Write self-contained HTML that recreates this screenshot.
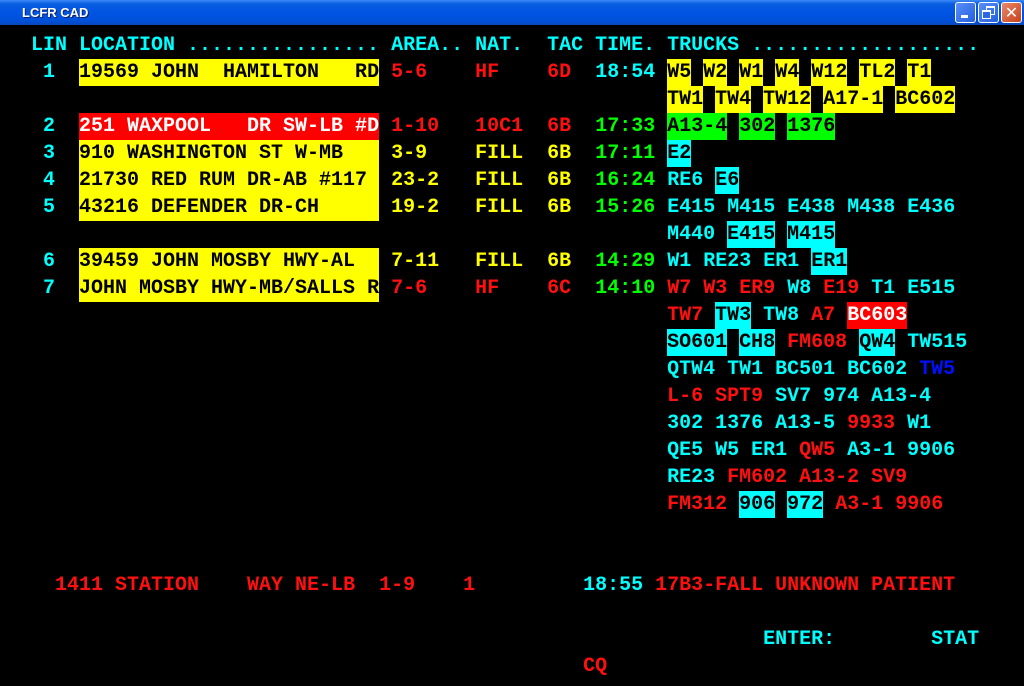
<!DOCTYPE html>
<html><head><meta charset="utf-8"><style>
html,body{margin:0;padding:0;}
body{width:1024px;height:686px;background:#000;position:relative;overflow:hidden;}
.tb{position:absolute;left:0;top:0;width:1024px;height:25px;background:linear-gradient(#3d8af7 0%,#0a5ee0 15%,#0054e3 50%,#0050d8 85%,#0a46b8 100%);}
.tt{position:absolute;left:22px;top:5px;color:#fff;font:bold 13px "Liberation Sans",sans-serif;text-shadow:1px 1px #0a1f6a;}
.btn{position:absolute;top:2px;width:19px;height:19px;border:1px solid #fff;border-radius:3px;background:linear-gradient(135deg,#5a8ef8,#2360e0);}
.btn.x{background:linear-gradient(135deg,#e88a6a,#c8401c);}
.r{position:absolute;left:7px;height:27px;line-height:27px;white-space:pre;font:bold 20px "Liberation Mono",monospace;color:#00ffff;}
.r span{padding:2px 0;}
.c{color:#00ffff}.y{color:#ffff00}.rd{color:#ff1010}.g{color:#00ff00}.b{color:#0010ff}
.Y{background:#ffff00;color:#000}.R{background:#ff0000;color:#fff}.G{background:#00ff00;color:#000}.C{background:#00ffff;color:#000}
</style></head><body>
<div class="tb"><div class="tt">LCFR CAD</div>
<div class="btn" style="left:955px"><div style="position:absolute;left:5px;top:12px;width:7px;height:3px;background:#fff"></div></div>
<div class="btn" style="left:978px"><div style="position:absolute;left:7px;top:3px;width:7px;height:6px;border:1px solid #fff;border-top-width:2px"></div><div style="position:absolute;left:3px;top:7px;width:7px;height:6px;border:1px solid #fff;border-top-width:2px;background:#2d68e4"></div></div>
<div class="btn x" style="left:1001px"><div style="position:absolute;left:2px;top:0;width:15px;text-align:center;color:#fff;font:bold 16px/19px 'DejaVu Sans',sans-serif">✕</div></div>
</div>
<div class="r" style="top:34px">  LIN LOCATION ................ AREA.. NAT.  TAC TIME. TRUCKS ...................</div>
<div class="r" style="top:61px">   1  <span class="Y">19569 JOHN  HAMILTON   RD</span> <span class="rd">5-6</span>    <span class="rd">HF</span>    <span class="rd">6D</span>  <span class="c">18:54</span> <span class="Y">W5</span> <span class="Y">W2</span> <span class="Y">W1</span> <span class="Y">W4</span> <span class="Y">W12</span> <span class="Y">TL2</span> <span class="Y">T1</span></div>
<div class="r" style="top:88px">                                                       <span class="Y">TW1</span> <span class="Y">TW4</span> <span class="Y">TW12</span> <span class="Y">A17-1</span> <span class="Y">BC602</span></div>
<div class="r" style="top:115px">   2  <span class="R">251 WAXPOOL   DR SW-LB #D</span> <span class="rd">1-10</span>   <span class="rd">10C1</span>  <span class="rd">6B</span>  <span class="g">17:33</span> <span class="G">A13-4</span> <span class="G">302</span> <span class="G">1376</span></div>
<div class="r" style="top:142px">   3  <span class="Y">910 WASHINGTON ST W-MB   </span> <span class="y">3-9</span>    <span class="y">FILL</span>  <span class="y">6B</span>  <span class="g">17:11</span> <span class="C">E2</span></div>
<div class="r" style="top:169px">   4  <span class="Y">21730 RED RUM DR-AB #117 </span> <span class="y">23-2</span>   <span class="y">FILL</span>  <span class="y">6B</span>  <span class="g">16:24</span> RE6 <span class="C">E6</span></div>
<div class="r" style="top:196px">   5  <span class="Y">43216 DEFENDER DR-CH     </span> <span class="y">19-2</span>   <span class="y">FILL</span>  <span class="y">6B</span>  <span class="g">15:26</span> E415 M415 E438 M438 E436</div>
<div class="r" style="top:223px">                                                       M440 <span class="C">E415</span> <span class="C">M415</span></div>
<div class="r" style="top:250px">   6  <span class="Y">39459 JOHN MOSBY HWY-AL  </span> <span class="y">7-11</span>   <span class="y">FILL</span>  <span class="y">6B</span>  <span class="g">14:29</span> W1 RE23 ER1 <span class="C">ER1</span></div>
<div class="r" style="top:277px">   7  <span class="Y">JOHN MOSBY HWY-MB/SALLS R</span> <span class="rd">7-6</span>    <span class="rd">HF</span>    <span class="rd">6C</span>  <span class="g">14:10</span> <span class="rd">W7 W3 ER9</span> W8 <span class="rd">E19</span> T1 E515</div>
<div class="r" style="top:304px">                                                       <span class="rd">TW7</span> <span class="C">TW3</span> TW8 <span class="rd">A7</span> <span class="R">BC603</span></div>
<div class="r" style="top:331px">                                                       <span class="C">SO601</span> <span class="C">CH8</span> <span class="rd">FM608</span> <span class="C">QW4</span> TW515</div>
<div class="r" style="top:358px">                                                       QTW4 TW1 BC501 BC602 <span class="b">TW5</span></div>
<div class="r" style="top:385px">                                                       <span class="rd">L-6 SPT9</span> SV7 974 A13-4</div>
<div class="r" style="top:412px">                                                       302 1376 A13-5 <span class="rd">9933</span> W1</div>
<div class="r" style="top:439px">                                                       QE5 W5 ER1 <span class="rd">QW5</span> A3-1 9906</div>
<div class="r" style="top:466px">                                                       RE23 <span class="rd">FM602 A13-2 SV9</span></div>
<div class="r" style="top:493px">                                                       <span class="rd">FM312</span> <span class="C">906</span> <span class="C">972</span> <span class="rd">A3-1 9906</span></div>
<div class="r" style="top:574px">    <span class="rd">1411 STATION    WAY NE-LB  1-9    1</span>         18:55 <span class="rd">17B3-FALL UNKNOWN PATIENT</span></div>
<div class="r" style="top:628px">                                                               ENTER:        STAT</div>
<div class="r" style="top:655px">                                                <span class="rd">CQ</span></div>
</body></html>
